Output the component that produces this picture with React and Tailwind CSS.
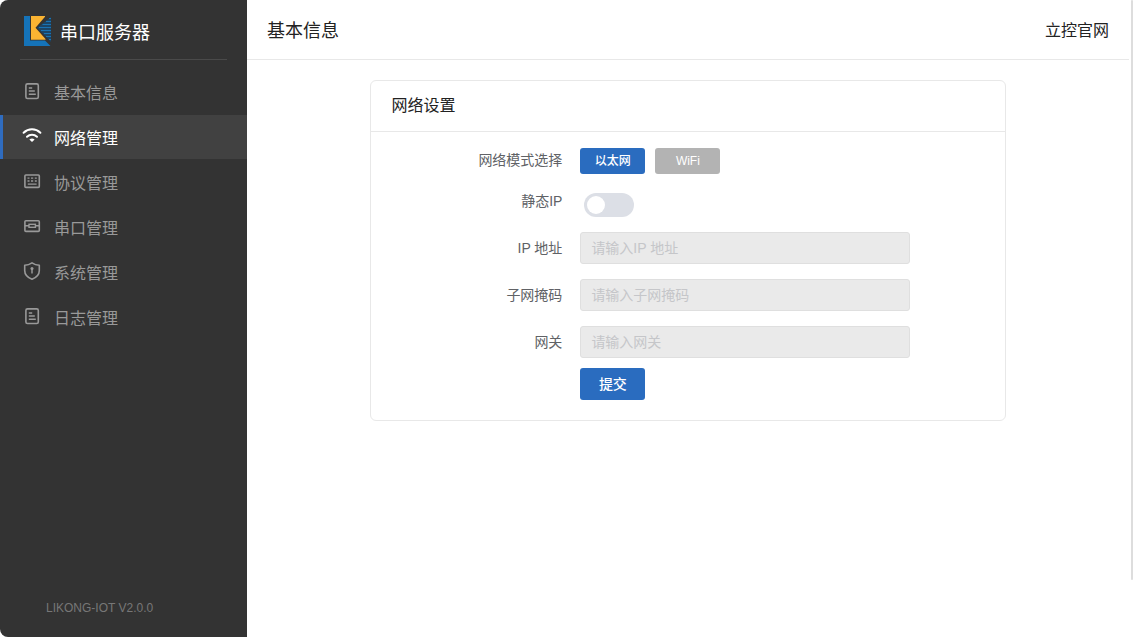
import { useState } from 'react';

const DocIcon = () => (
  <svg className="size-5 shrink-0" viewBox="0 0 20 20" fill="none" stroke="currentColor" strokeWidth="1.6">
    <rect x="3.9" y="1.9" width="12.4" height="14.6" rx="1.6" />
    <path d="M6.8 6h3.4M6.8 9h6M6.8 12.2h7" strokeWidth="1.5" />
  </svg>
);

const WifiIcon = () => (
  <svg className="size-5 shrink-0" viewBox="0 0 20 20" fill="none" stroke="currentColor" strokeWidth="2">
    <path d="M1.6 5.8C6.4 1.2 13.6 1.2 18.4 5.8" strokeLinecap="round" />
    <path d="M5 9.8C7.8 7.2 12.2 7.2 15 9.8" strokeLinecap="round" />
    <path d="M7.4 12.4q2.6-1.8 5.2 0L10 15z" fill="currentColor" stroke="none" />
  </svg>
);

const ProtocolIcon = () => (
  <svg className="size-5 shrink-0" viewBox="0 0 20 20" fill="none" stroke="currentColor" strokeWidth="1.6">
    <rect x="2.9" y="3" width="14.4" height="12.4" rx="1" />
    <path d="M5.5 6.2h2M9 6.2h2.2M12.800 6.200h2M5.500 9h2M9 9h2.200M12.800 9h2M5.800 12.200h8.800" strokeWidth="1.3" />
  </svg>
);

const SerialIcon = () => (
  <svg className="size-5 shrink-0" viewBox="0 0 20 20" fill="none" stroke="currentColor" strokeWidth="1.6">
    <rect x="2.9" y="3.8" width="14.4" height="10.6" rx="1" />
    <path d="M3 8.8h4M13.4 8.8h4" strokeWidth="1.4" />
    <rect x="7" y="7.3" width="6.4" height="3" strokeWidth="1.4" />
  </svg>
);

const ShieldIcon = () => (
  <svg className="size-5 shrink-0" viewBox="0 0 20 20" fill="none" stroke="currentColor" strokeWidth="1.6">
    <path d="M10 .9c2.2 1.5 4.6 2.3 7.3 2.4v5.2c0 4.3-2.8 7-7.3 8.8-4.5-1.8-7.3-4.5-7.3-8.8V3.3C5.4 3.2 7.8 2.4 10 .9z" strokeLinejoin="round" />
    <path d="M10 6v5.400" strokeWidth="1.500" />
    <circle cx="10" cy="6.500" r="1.500" fill="currentColor" stroke="none" />
  </svg>
);

const Logo = () => (
  <svg className="w-7 h-[30px] shrink-0" viewBox="0 0 28 30">
    <path d="M0 0h6v24.500h15l5.500 5.500H0z" fill="#1573b8" />
    <path d="M27 1L13 11.800l14 14.200z" fill="#1b4566" />
    <path d="M25 2.500h2M22 5.500h5M18.500 8.500h8.500M15 11.500h12M17 14.500h10M20 17.500h7M22 20.500h5M25 23.500h2" stroke="#1973b4" strokeWidth="1.200" />
    <path d="M7 0h14v.800L11.500 11.800 21.500 23v.800H7z" fill="#fbb432" />
  </svg>
);

const menus = [
  { key: 'info', label: '基本信息', icon: DocIcon },
  { key: 'network', label: '网络管理', icon: WifiIcon },
  { key: 'protocol', label: '协议管理', icon: ProtocolIcon },
  { key: 'serial', label: '串口管理', icon: SerialIcon },
  { key: 'system', label: '系统管理', icon: ShieldIcon },
  { key: 'log', label: '日志管理', icon: DocIcon },
];

const fields = [
  { id: 'ip', label: 'IP 地址', placeholder: '请输入IP 地址' },
  { id: 'mask', label: '子网掩码', placeholder: '请输入子网掩码' },
  { id: 'gateway', label: '网关', placeholder: '请输入网关' },
];

const modes = ['以太网', 'WiFi'];

function Sidebar({ active, onChange }) {
  return (
    <aside className="w-[247px] shrink-0 flex flex-col bg-[#333333] rounded-l-lg">
      <div className="mx-5 h-[60px] pl-1 pt-0.5 flex items-center gap-2 border-b border-[#4a4a4a]">
        <Logo />
        <span className="pt-1 text-lg text-white">串口服务器</span>
      </div>
      <nav className="mt-[10px] flex flex-col gap-px">
        {menus.map(({ key, label, icon: Icon }) => (
          <button
            key={key}
            type="button"
            onClick={() => onChange(key)}
            className={`h-11 w-full flex items-center gap-3 pl-[19px] border-l-3 text-base ${
              active === key
                ? 'bg-[#414141] border-[#2f6cbf] text-white'
                : 'border-transparent text-[#999999]'
            }`}
          >
            <Icon />
            <span className="pt-1">{label}</span>
          </button>
        ))}
      </nav>
      <div className="mt-auto mb-5 pl-[46px] text-xs leading-[18px] text-[#777777]">LIKONG-IOT V2.0.0</div>
    </aside>
  );
}

function NetworkForm() {
  const [mode, setMode] = useState('以太网');
  const [isStatic, setIsStatic] = useState(false);

  return (
    <form className="pt-4 pb-5 text-sm text-[#606266]" onSubmit={(e) => e.preventDefault()}>
      <div className="flex">
        <span id="mode-label" className="w-[33%] pr-[18px] text-right leading-6">网络模式选择</span>
        <div className="flex gap-[10px]" role="group" aria-labelledby="mode-label">
          {modes.map((m) => (
            <button
              key={m}
              type="button"
              onClick={() => setMode(m)}
              className={`w-[65px] h-[26px] rounded-[3px] text-xs font-medium text-white ${
                mode === m ? 'bg-[#2a6cbf]' : 'bg-[#b3b3b3]'
              }`}
            >
              {m}
            </button>
          ))}
        </div>
      </div>

      <div className="mt-[15px] flex">
        <label htmlFor="static-ip" className="w-[33%] pr-[18px] text-right leading-6">静态IP</label>
        <input
          id="static-ip"
          type="checkbox"
          checked={isStatic}
          onChange={(e) => setIsStatic(e.target.checked)}
          className="appearance-none mt-1 ml-1 w-[50px] h-6 p-[3px] rounded-full bg-[#dcdfe6] checked:bg-[#2a6cbf] before:block before:size-[18px] before:rounded-full before:bg-white checked:before:ml-auto"
        />
      </div>

      <div className="mt-[15px] flex flex-col gap-[15px]">
        {fields.map(({ id, label, placeholder }) => (
          <div key={id} className="flex">
            <label htmlFor={id} className="w-[33%] pr-[18px] text-right leading-8">{label}</label>
            <input
              id={id}
              type="text"
              disabled={!isStatic}
              placeholder={placeholder}
              className="w-[330px] h-8 px-[10px] rounded-[3px] border border-[#dfdfdf] disabled:bg-[#eaeaea] placeholder:text-[#c5c6c9]"
            />
          </div>
        ))}
      </div>

      <div className="mt-[10px] pl-[33%]">
        <button type="submit" className="w-[65px] h-8 rounded-[3px] bg-[#2a6cbf] text-sm font-medium text-white">
          提交
        </button>
      </div>
    </form>
  );
}

export default function App() {
  const [active, setActive] = useState('network');

  return (
    <div className="min-h-screen flex bg-white font-['Liberation_Sans','Noto_Sans_CJK_SC',sans-serif]">
      <Sidebar active={active} onChange={setActive} />
      <main className="flex-1">
        <header className="h-[60px] px-5 pt-0.5 flex items-center justify-between border-b border-[#e8e8e8] text-[#222222]">
          <h1 className="text-lg">基本信息</h1>
          <a href="#" className="text-base">立控官网</a>
        </header>
        <section className="mt-5 mx-auto w-[72%] rounded-md border border-[#e8e8e8]">
          <h2 className="h-[51px] px-5 flex items-center border-b border-[#e8e8e8] text-base text-[#222222]">网络设置</h2>
          <NetworkForm />
        </section>
      </main>
      {/* scroll track */}
      <div className="w-[6px] pl-0.5 flex">
        <div className="w-0.5 h-[91vh] rounded-full bg-[#dddddd]" />
      </div>
    </div>
  );
}
